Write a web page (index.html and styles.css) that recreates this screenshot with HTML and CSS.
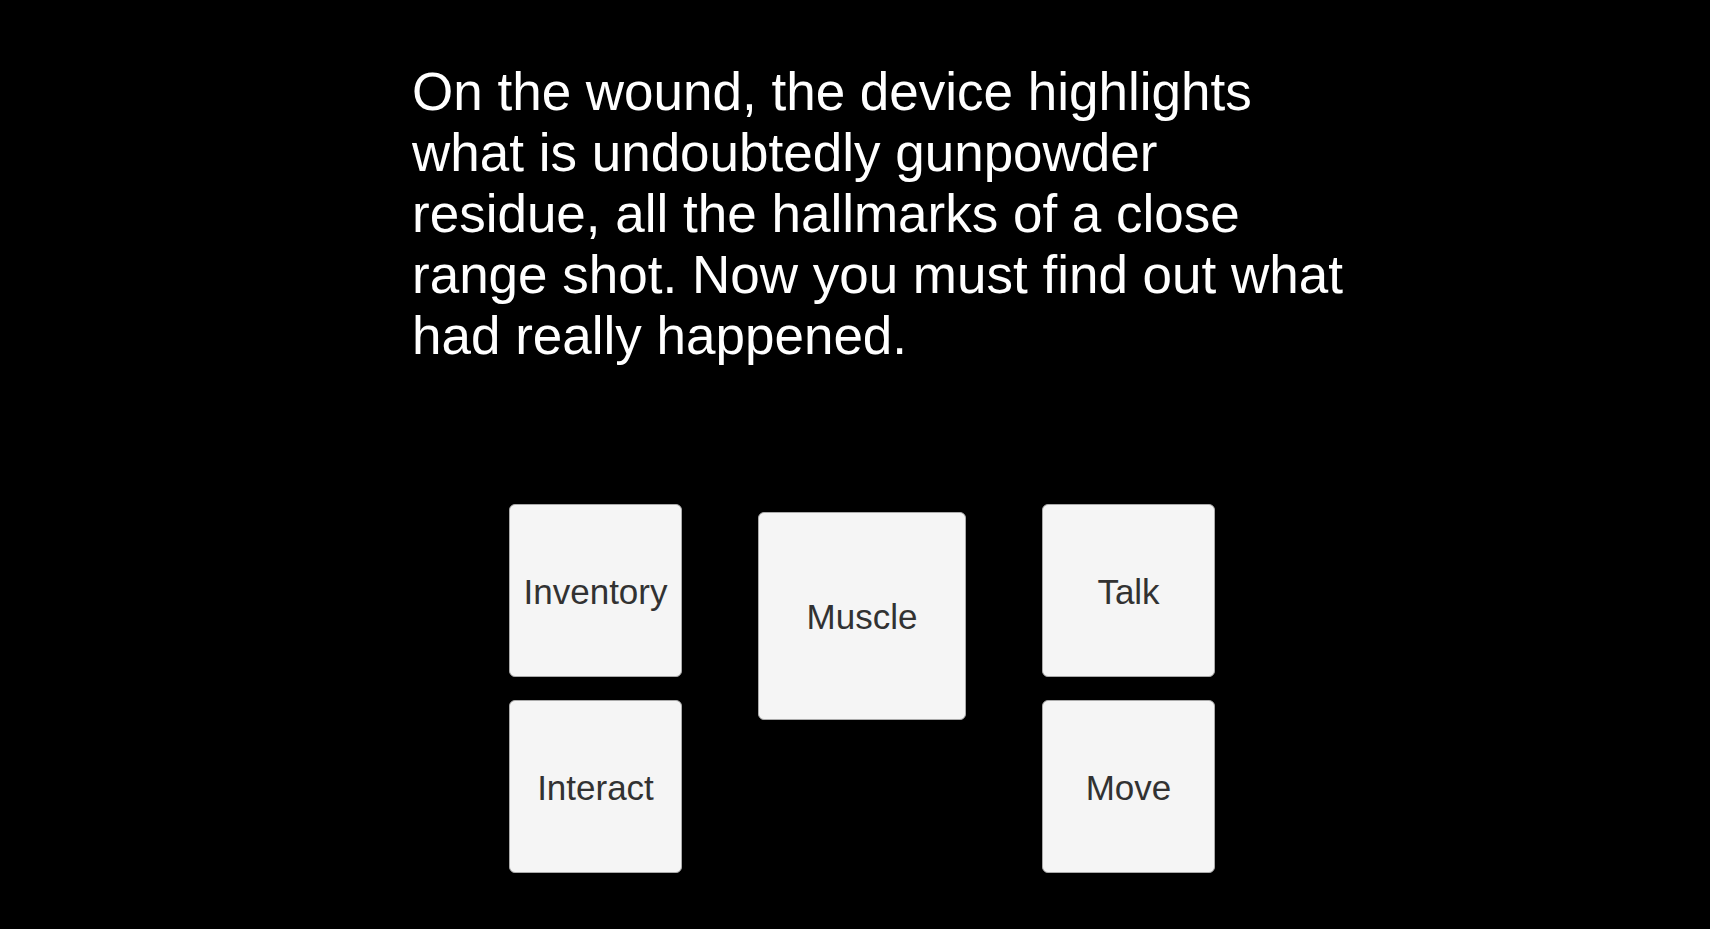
FILE: index.html
```html
<!DOCTYPE html>
<html lang="en">
<head>
<meta charset="utf-8">
<title>Investigation</title>
<link rel="stylesheet" href="styles.css">
</head>
<body>
<main class="game">
  <p class="story">On the wound, the device highlights what is undoubtedly gunpowder residue, all the hallmarks of a close range shot. Now you must find out what had really happened.</p>
  <div class="actions">
    <div class="column">
      <button class="action" type="button">Inventory</button>
      <button class="action" type="button">Interact</button>
    </div>
    <button class="action action-large" type="button">Muscle</button>
    <div class="column">
      <button class="action" type="button">Talk</button>
      <button class="action" type="button">Move</button>
    </div>
  </div>
</main>
</body>
</html>
```

FILE: styles.css
```css
* {
  box-sizing: border-box;
}

body {
  margin: 0;
  background: #000;
  font-family: "Liberation Sans", Arial, sans-serif;
}

.game {
  display: flex;
  flex-direction: column;
  align-items: center;
  gap: 138px;
  padding: 61px 0 48px 14px;
}

.story {
  width: 100%;
  max-width: 964px;
  margin: 0;
  padding-left: 32px;
  color: #fff;
  font-size: 53px;
  line-height: 61px;
}

.actions {
  display: flex;
  align-items: flex-start;
  gap: 76px;
}

.column {
  display: flex;
  flex-direction: column;
  gap: 23px;
}

.action {
  width: 173px;
  height: 173px;
  padding: 2px 0 0;
  border: 1px solid #aaa;
  border-radius: 6px;
  background: #f5f5f5;
  color: #323232;
  font-family: inherit;
  font-size: 35px;
}

.action-large {
  width: 208px;
  height: 208px;
  margin-top: 8px;
}
```
